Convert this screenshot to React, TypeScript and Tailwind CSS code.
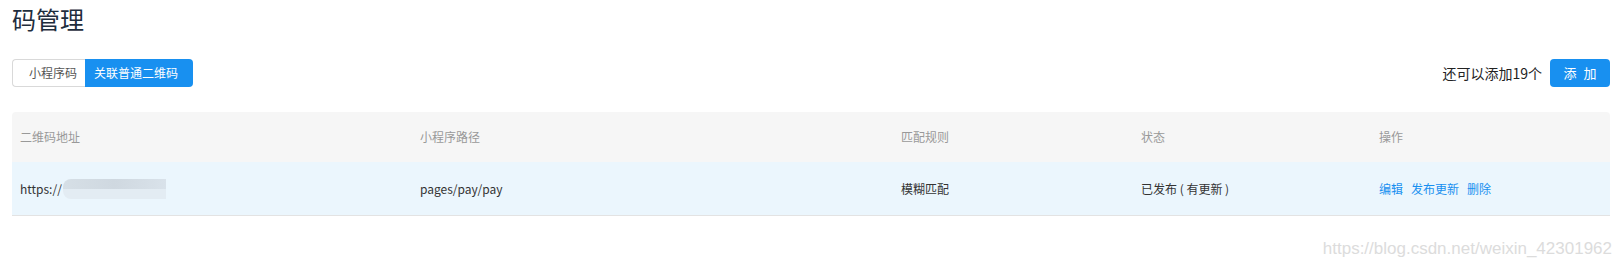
import React from "react";

const font = { fontFamily: '"Noto Sans CJK SC", "Noto Sans", sans-serif' };

export default function App() {
  return (
    <div className="relative w-[1622px] h-[266px] bg-white text-[12px] text-[#333]" style={font}>
      <div className="pl-[12px] pr-[12px]">
        <h1 className="pt-[1px] text-[24px] leading-[36px] text-[#1f2d3d] font-normal">码管理</h1>
        <div className="mt-[22px] flex items-center justify-between">
          <div className="flex h-[28px]">
            <button className="h-full pl-[16px] pr-[8px] border border-[#d9d9d9] border-r-0 rounded-l-[4px] bg-white text-[#555] text-[12px] leading-[26px]">
              小程序码
            </button>
            <button className="h-full pl-[9px] pr-[15px] rounded-r-[4px] bg-[#1890f0] text-white text-[12px] leading-[28px]">
              关联普通二维码
            </button>
          </div>
          <div className="flex items-center h-[28px]">
            <span className="text-[14px] text-[#222]">还可以添加19个</span>
            <button className="ml-[8px] w-[60px] h-[28px] rounded-[4px] bg-[#1890f0] text-white text-[13px] tracking-[2px] pl-[2px]">
              添 加
            </button>
          </div>
        </div>
        <div className="mt-[25px] rounded-t-[4px] overflow-hidden">
          <div className="grid grid-cols-[408px_481px_240px_238px_1fr] h-[50px] items-center bg-[#f6f6f6] text-[#999]">
            <div className="pl-[8px]">二维码地址</div>
            <div>小程序路径</div>
            <div>匹配规则</div>
            <div>状态</div>
            <div>操作</div>
          </div>
          <div className="grid grid-cols-[408px_481px_240px_238px_1fr] h-[54px] items-center bg-[#ebf6fd] border-b border-[#e3e3e3] text-[#333]">
            <div className="pl-[8px] flex items-center">
              <span>https://</span>
              <span className="ml-[1px] flex flex-col w-[103px] h-[20px] rounded-l-[8px] overflow-hidden">
                <span className="flex-1 bg-gradient-to-r from-[#d6dfe6] via-[#cfd8e0] to-[#d9e2ea]"></span>
                <span className="flex-1 bg-[#e3ecf3]"></span>
              </span>
            </div>
            <div>pages/pay/pay</div>
            <div>模糊匹配</div>
            <div>已发布 ( 有更新 )</div>
            <div className="flex gap-[8px] text-[#1890f0]">
              <span>编辑</span>
              <span>发布更新</span>
              <span>删除</span>
            </div>
          </div>
        </div>
      </div>
      <div
        className="absolute right-[10px] top-[236px] text-[17px] text-[#dcdcdc]"
        style={{ fontFamily: '"Liberation Sans", Arial, sans-serif' }}
      >
        https://blog.csdn.net/weixin_42301962
      </div>
    </div>
  );
}
